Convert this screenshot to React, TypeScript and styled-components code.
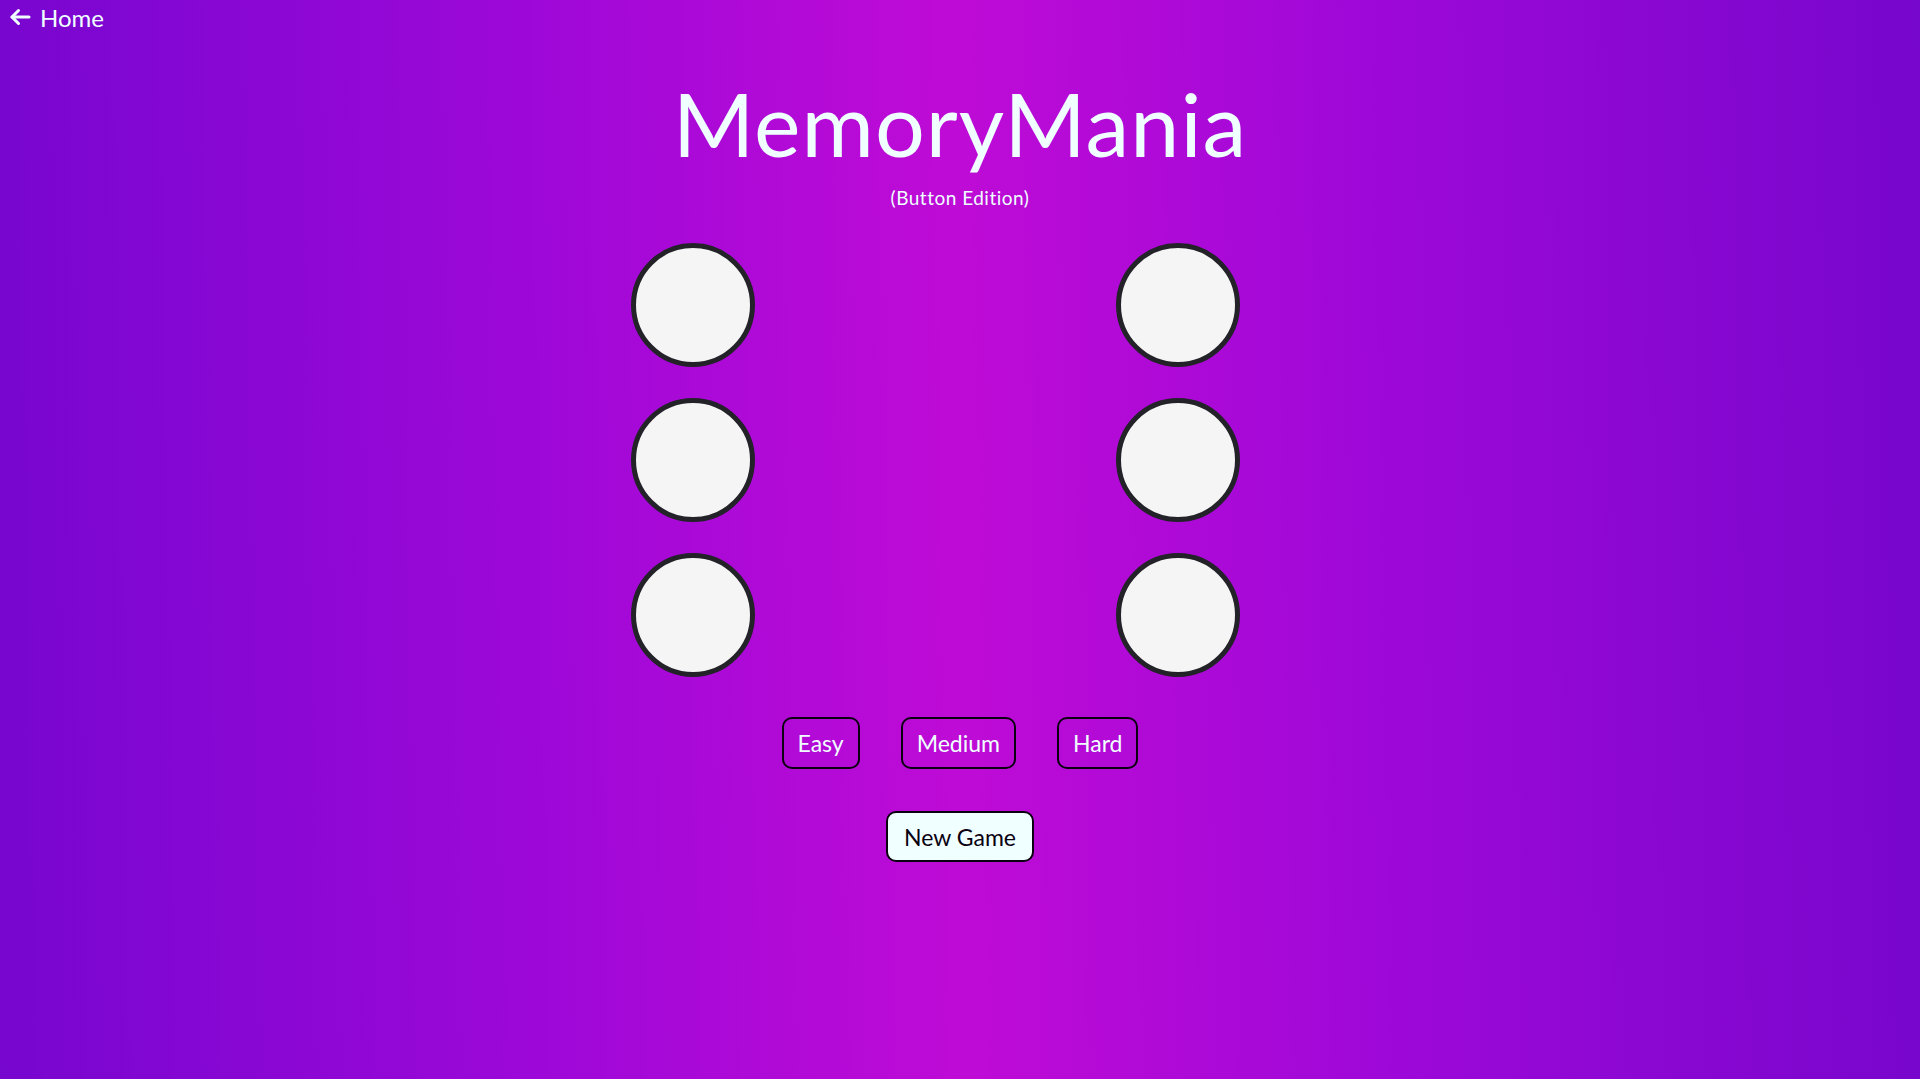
import styled, { createGlobalStyle } from 'styled-components';

const GlobalStyle = createGlobalStyle`
  html, body {
    margin: 0;
    padding: 0;
  }
  body {
    font-family: Lato, "Open Sans", sans-serif;
    min-height: 1079px;
    background: linear-gradient(89deg, #7706cf 0%, #9d08d8 28%, #bf0bd6 50%, #9d08d8 72%, #7706cc 100%);
  }
`;

const Page = styled.div`
  min-height: 1079px;
  display: flex;
  flex-direction: column;
  color: #f0ffff;
`;

const TopBar = styled.div`
  display: flex;
  padding: 3px 0 0 9px;
  height: 28px;
`;

const HomeLink = styled.a`
  display: flex;
  align-items: center;
  gap: 9px;
  color: #f0ffff;
  font-size: 24px;
  text-decoration: none;
  cursor: pointer;
`;

const Main = styled.main`
  display: flex;
  flex-direction: column;
  align-items: center;
`;

const Title = styled.h1`
  margin: 48px 0 0;
  font-size: 88px;
  font-weight: 400;
  letter-spacing: 1px;
  line-height: 1;
`;

const Subtitle = styled.p`
  margin: 19px 0 0;
  font-size: 19px;
  letter-spacing: 0.5px;
`;

const Board = styled.div`
  display: grid;
  grid-template-columns: repeat(2, 124px);
  column-gap: 361px;
  row-gap: 31px;
  margin: 34px 50px 0 0;
`;

const Pad = styled.button`
  width: 124px;
  height: 124px;
  box-sizing: border-box;
  border-radius: 50%;
  border: 5px solid #222228;
  background: #f5f5f5;
  padding: 0;
  cursor: pointer;
`;

const Levels = styled.div`
  display: flex;
  gap: 41px;
  margin-top: 40px;
`;

const LevelButton = styled.button`
  height: 52px;
  padding: 0 14px;
  border: 2px solid #0a0010;
  border-radius: 10px;
  background: transparent;
  color: #f0ffff;
  font-family: Lato, "Open Sans", sans-serif;
  font-size: 23px;
  cursor: pointer;
`;

const NewGameButton = styled(LevelButton)`
  margin-top: 42px;
  height: 51px;
  width: 148px;
  padding: 0;
  background: #f0ffff;
  color: #0a0010;
`;

const ArrowIcon = () => (
  <svg width="22" height="18" viewBox="0 0 22 18" fill="none" stroke="currentColor" strokeWidth="3" strokeLinecap="round" strokeLinejoin="round">
    <path d="M20 9H3" />
    <path d="M9.5 2.5L3 9l6.5 6.5" />
  </svg>
);

export default function App() {
  const pads = [0, 1, 2, 3, 4, 5];
  return (
    <>
      <GlobalStyle />
      <Page>
        <TopBar>
          <HomeLink>
            <ArrowIcon />
            Home
          </HomeLink>
        </TopBar>
        <Main>
          <Title>MemoryMania</Title>
          <Subtitle>(Button Edition)</Subtitle>
          <Board>
            {pads.map((p) => (
              <Pad key={p} aria-label={`pad ${p + 1}`} />
            ))}
          </Board>
          <Levels>
            <LevelButton>Easy</LevelButton>
            <LevelButton>Medium</LevelButton>
            <LevelButton>Hard</LevelButton>
          </Levels>
          <NewGameButton>New Game</NewGameButton>
        </Main>
      </Page>
    </>
  );
}
